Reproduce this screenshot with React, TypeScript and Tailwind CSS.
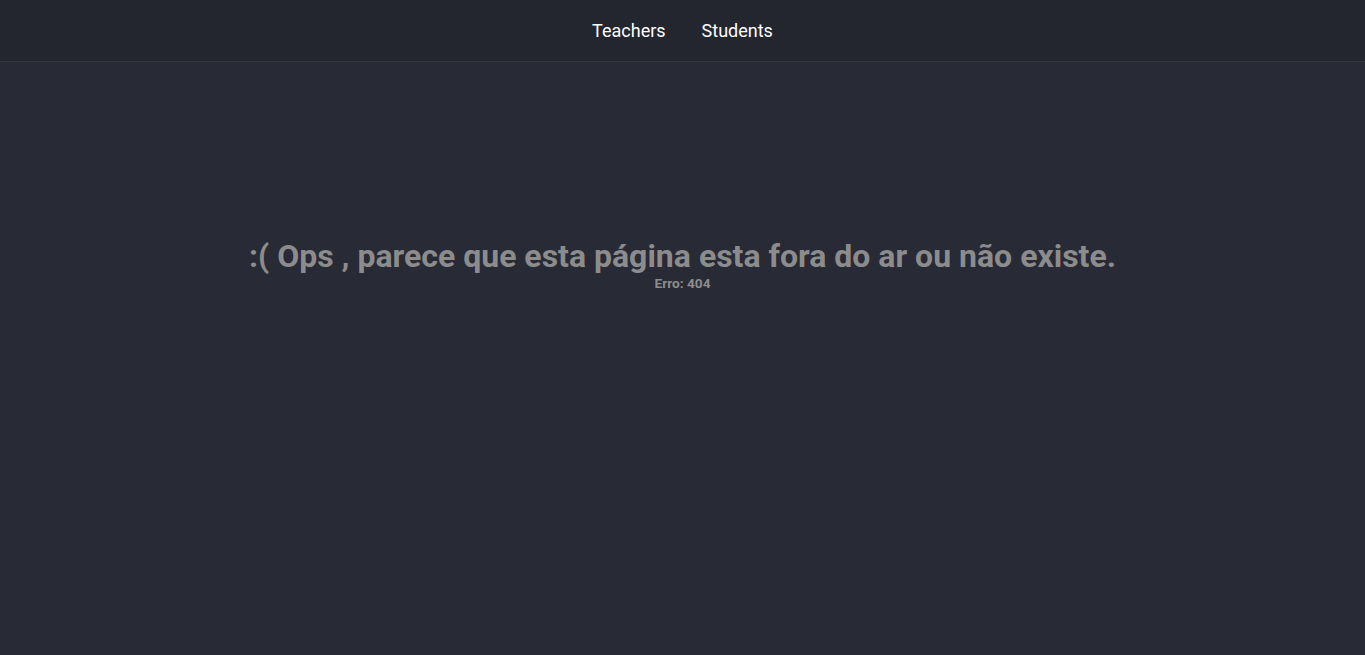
export default function App() {
  return (
    <div className="min-h-[655px] bg-[#282a36] font-['Roboto',sans-serif]">
      {/* Header */}
      <header className="h-[62px] bg-[#23262f] border-b border-[#3a3540] flex items-center justify-center gap-9">
        <a className="text-white text-[18px]">Teachers</a>
        <a className="text-white text-[18px]">Students</a>
      </header>

      {/* Not found */}
      <main className="flex flex-col items-center pt-[174px] text-[#8c8c8c] font-bold">
        <h1 className="text-[32px] leading-[40px]">
          :( Ops , parece que esta página esta fora do ar ou não existe.
        </h1>
        <p className="text-[13.7px] leading-[14px]">Erro: 404</p>
      </main>
    </div>
  );
}
